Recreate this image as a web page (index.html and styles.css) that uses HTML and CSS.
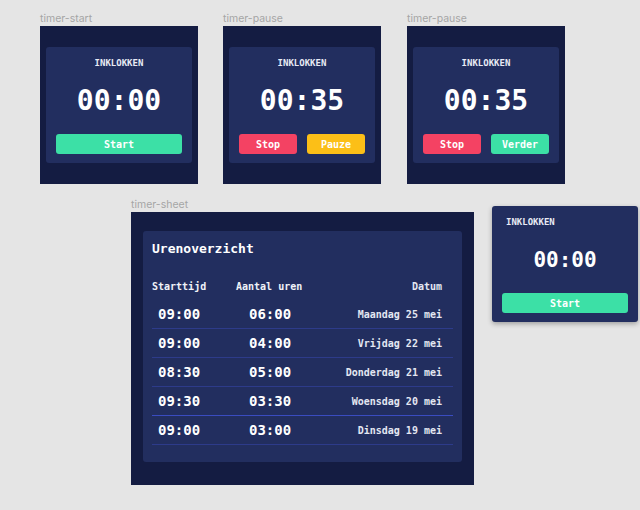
FILE: index.html
```html
<!DOCTYPE html>
<html lang="nl">
<head>
    <meta charset="UTF-8">
    <meta name="viewport" content="width=device-width, initial-scale=1.0">
    <title>Timer</title>
    <link rel="stylesheet" href="styles.css">
</head>
<body>
    <main class="canvas">
        <!-- timer-start -->
        <div class="board board-start">
            <div class="board-label">timer-start</div>
            <div class="frame">
                <div class="card">
                    <div class="card-title">INKLOKKEN</div>
                    <div class="clock">00:00</div>
                    <div class="actions">
                        <button class="btn btn-green">Start</button>
                    </div>
                </div>
            </div>
        </div>

        <!-- timer-pause -->
        <div class="board board-pause">
            <div class="board-label">timer-pause</div>
            <div class="frame">
                <div class="card">
                    <div class="card-title">INKLOKKEN</div>
                    <div class="clock">00:35</div>
                    <div class="actions">
                        <button class="btn btn-red">Stop</button>
                        <button class="btn btn-yellow">Pauze</button>
                    </div>
                </div>
            </div>
        </div>

        <!-- timer-pause (verder) -->
        <div class="board board-resume">
            <div class="board-label">timer-pause</div>
            <div class="frame">
                <div class="card">
                    <div class="card-title">INKLOKKEN</div>
                    <div class="clock">00:35</div>
                    <div class="actions">
                        <button class="btn btn-red">Stop</button>
                        <button class="btn btn-green">Verder</button>
                    </div>
                </div>
            </div>
        </div>

        <!-- timer-sheet -->
        <div class="board board-sheet">
            <div class="board-label">timer-sheet</div>
            <div class="frame frame-sheet">
                <div class="sheet">
                    <h2 class="sheet-title">Urenoverzicht</h2>
                    <div class="sheet-head">
                        <span>Starttijd</span>
                        <span>Aantal uren</span>
                        <span class="col-date">Datum</span>
                    </div>
                    <div class="sheet-row">
                        <span class="cell-time">09:00</span>
                        <span class="cell-time">06:00</span>
                        <span class="col-date">Maandag 25 mei</span>
                    </div>
                    <div class="sheet-row">
                        <span class="cell-time">09:00</span>
                        <span class="cell-time">04:00</span>
                        <span class="col-date">Vrijdag 22 mei</span>
                    </div>
                    <div class="sheet-row">
                        <span class="cell-time">08:30</span>
                        <span class="cell-time">05:00</span>
                        <span class="col-date">Donderdag 21 mei</span>
                    </div>
                    <div class="sheet-row sheet-row-active">
                        <span class="cell-time">09:30</span>
                        <span class="cell-time">03:30</span>
                        <span class="col-date">Woensdag 20 mei</span>
                    </div>
                    <div class="sheet-row">
                        <span class="cell-time">09:00</span>
                        <span class="cell-time">03:00</span>
                        <span class="col-date">Dinsdag 19 mei</span>
                    </div>
                </div>
            </div>
        </div>

        <!-- losse component -->
        <div class="card card-float">
            <div class="card-title">INKLOKKEN</div>
            <div class="clock clock-small">00:00</div>
            <div class="actions">
                <button class="btn btn-green">Start</button>
            </div>
        </div>
    </main>
</body>
</html>
```

FILE: styles.css
```css
body {
    margin: 0;
    padding: 0;
    background-color: #e5e5e5;
    font-family: "DejaVu Sans Mono", monospace;
    color: #fff;
}

.canvas {
    position: relative;
    width: 640px;
    height: 510px;
    overflow: hidden;
}

/* boards on the canvas */
.board {
    position: absolute;
}

.board-start { left: 40px; top: 12px; }
.board-pause { left: 223px; top: 12px; }
.board-resume { left: 407px; top: 12px; }
.board-sheet { left: 131px; top: 198px; }

.board-label {
    font-family: Inter, "Noto Sans", sans-serif;
    font-size: 10.5px;
    line-height: 14px;
    color: #a6a6a6;
}

.frame {
    width: 158px;
    height: 158px;
    box-sizing: border-box;
    padding: 21px 6px;
    background: #141c42;
}

/* timer card */
.card {
    width: 146px;
    height: 116px;
    box-sizing: border-box;
    padding: 10px 10px 9px;
    background: #222e5f;
    border-radius: 3px;
    display: flex;
    flex-direction: column;
}

.card-title {
    font-size: 9px;
    line-height: 12px;
    font-weight: bold;
    text-align: center;
    color: #e8eaf4;
}

.clock {
    margin-top: 15px;
    font-size: 28px;
    line-height: 34px;
    font-weight: bold;
    text-align: center;
}

.actions {
    margin-top: 16px;
    display: flex;
    gap: 10px;
}

.btn {
    flex: 1;
    height: 20px;
    padding: 0;
    border: none;
    border-radius: 3px;
    font-family: "DejaVu Sans Mono", monospace;
    font-size: 10px;
    font-weight: bold;
    color: #fff;
}

.btn-green { background: #3ce0a6; }
.btn-red { background: #f44263; }
.btn-yellow { background: #fcbf17; }

.card-float {
    position: absolute;
    left: 492px;
    top: 206px;
    box-shadow: 0 2px 5px rgba(0, 0, 0, 0.3);
}

.card-float .card-title {
    text-align: left;
    padding-left: 4px;
}

.clock-small {
    font-size: 21px;
}

/* timer sheet */
.frame-sheet {
    width: 343px;
    height: 273px;
    padding: 19px 12px 23px;
}

.sheet {
    height: 100%;
    box-sizing: border-box;
    padding: 9px 9px 0;
    background: #222e5f;
    border-radius: 3px;
}

.sheet-title {
    margin: 0;
    font-size: 13px;
    line-height: 18px;
    font-weight: bold;
}

.sheet-head {
    margin-top: 22px;
    margin-bottom: 6px;
    display: grid;
    grid-template-columns: 84px 1fr auto;
    font-size: 10px;
    line-height: 14px;
    font-weight: bold;
    color: #f0f2f8;
    padding-right: 11px;
}

.sheet-row {
    height: 28px;
    display: grid;
    grid-template-columns: 91px 1fr auto;
    align-items: center;
    padding: 0 11px 0 6px;
    border-bottom: 1px solid #2d3b8a;
}

.sheet-row-active {
    border-bottom-color: #3a4cc0;
}

.cell-time {
    font-size: 14px;
    font-weight: bold;
}

.col-date {
    font-size: 10px;
    font-weight: bold;
    color: #e4e7f2;
    text-align: right;
}
```
